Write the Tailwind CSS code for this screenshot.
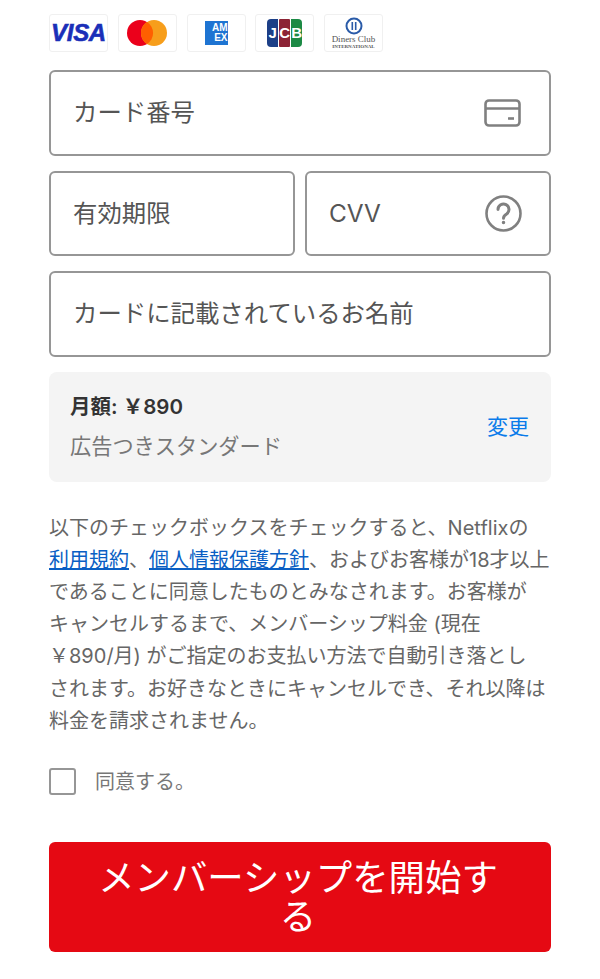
<!DOCTYPE html>
<html lang="ja">
<head>
<meta charset="UTF-8" />
<title>Payment</title>
<script src="https://cdn.jsdelivr.net/npm/@tailwindcss/browser@4"></script>
</head>
<body class="bg-white font-['Inter','Noto_Sans_CJK_JP',sans-serif] text-[#333] overflow-hidden">
<div class="w-[600px] h-[979px] px-[49px] pt-[14px]">

  <!-- card logos -->
  <div class="flex gap-[9.75px] h-[38px]">
    <div class="w-[59px] h-[38px] border border-[#f0f0f0] rounded-[3px] flex items-center justify-center">
      <span class="font-['Liberation_Sans',sans-serif] font-bold italic text-[24px] tracking-[-0.3px] text-[#1a2fb8] [-webkit-text-stroke:0.6px_#1a2fb8]">VISA</span>
    </div>
    <div class="w-[59px] h-[38px] border border-[#f0f0f0] rounded-[3px] flex items-center justify-center">
      <svg width="40" height="26" viewBox="0 0 40 26"><circle cx="13" cy="13" r="13" fill="#eb001b"/><circle cx="27" cy="13" r="13" fill="#f79e1b"/><path d="M20 2a13 13 0 0 1 0 22a13 13 0 0 1 0-22z" fill="#ff5f00"/></svg>
    </div>
    <div class="w-[59px] h-[38px] border border-[#f0f0f0] rounded-[3px] flex items-center justify-center">
      <div class="w-[23px] h-[24px] bg-[#1e74d2] flex flex-col items-end justify-center font-['Liberation_Sans',sans-serif] font-bold text-[10px] leading-[10px] text-white">
        <span>AM</span><span>EX</span>
      </div>
    </div>
    <div class="w-[59px] h-[38px] border border-[#f0f0f0] rounded-[3px] flex items-center justify-center">
      <div class="flex gap-[1px] font-['Liberation_Sans',sans-serif] font-bold text-[15px] text-white">
        <span class="w-[11px] h-[28px] bg-[#1c3f87] rounded-l-[4px] flex items-center justify-center">J</span>
        <span class="w-[11px] h-[28px] bg-[#8c2435] rounded-[1px] flex items-center justify-center">C</span>
        <span class="w-[11px] h-[28px] bg-[#1c8a45] rounded-r-[4px] flex items-center justify-center">B</span>
      </div>
    </div>
    <div class="w-[59px] h-[38px] border border-[#f0f0f0] rounded-[3px] flex flex-col items-center justify-center">
      <svg width="20" height="18" viewBox="0 0 20 18"><circle cx="10" cy="9" r="7.5" fill="none" stroke="#2a5ba8" stroke-width="2"/><path d="M8.3 5v8M11.7 5v8" stroke="#2a5ba8" stroke-width="1.6"/></svg>
      <span class="font-['Liberation_Serif',serif] text-[9px] leading-[9px] text-[#555]">Diners Club</span>
      <span class="font-['Liberation_Serif',serif] font-bold text-[5px] leading-[6px] text-[#555]">INTERNATIONAL</span>
    </div>
  </div>

  <!-- fields -->
  <div class="mt-[18px] h-[85.5px] border-2 border-[#969696] rounded-[6px] flex items-center justify-between pl-[22px] pr-[28px] text-[24.4px] text-[#555]">
    <span>カード番号</span>
    <svg width="37" height="28" viewBox="0 0 37 28" fill="none" stroke="#808080" stroke-width="2.6"><rect x="1.5" y="1.5" width="34" height="25" rx="3.5"/><path d="M1.5 9.5h34"/><path d="M24 19.5h6"/></svg>
  </div>
  <div class="mt-[15px] flex gap-[10px]">
    <div class="w-[246px] h-[85.5px] border-2 border-[#969696] rounded-[6px] flex items-center pl-[22px] text-[24.4px] text-[#555]">有効期限</div>
    <div class="w-[246px] h-[85.5px] border-2 border-[#969696] rounded-[6px] flex items-center justify-between pl-[22px] pr-[27px] text-[24.4px] text-[#555]">
      <span>CVV</span>
      <svg width="37" height="37" viewBox="0 0 37 37" fill="none" stroke="#808080" stroke-width="2.6"><circle cx="18.5" cy="18.5" r="17"/><path d="M13 14.5a5.5 5.5 0 1 1 8.6 4.5c-2.2 1.4-3.1 2.2-3.1 4.3" stroke-linecap="round" stroke-width="3"/><circle cx="18.5" cy="27.5" r="1" fill="#808080" stroke-width="1.5"/></svg>
    </div>
  </div>
  <div class="mt-[15px] h-[85.5px] border-2 border-[#969696] rounded-[6px] flex items-center pl-[22px] text-[24.4px] text-[#555]">カードに記載されているお名前</div>

  <!-- plan -->
  <div class="mt-[15.5px] h-[109.5px] bg-[#f4f4f4] rounded-[8px] flex items-center justify-between pl-[21px] pr-[22px]">
    <div>
      <div class="text-[20.5px] leading-[30px] font-semibold text-[#333]">月額: ￥890</div>
      <div class="mt-[9px] text-[21.2px] leading-[30px] text-[#777]">広告つきスタンダード</div>
    </div>
    <a class="text-[21px] text-[#0a7bea]">変更</a>
  </div>

  <!-- terms -->
  <p class="mt-[30px] text-[20px] leading-[32.2px] text-[#666]">以下のチェックボックスをチェックすると、Netflixの<br /><a class="text-[#0a5fc4] underline">利用規約</a>、<a class="text-[#0a5fc4] underline">個人情報保護方針</a>、およびお客様が18才以上<br />であることに同意したものとみなされます。お客様が<br />キャンセルするまで、メンバーシップ料金 (現在<br />￥890/月) がご指定のお支払い方法で自動引き落とし<br />されます。お好きなときにキャンセルでき、それ以降は<br />料金を請求されません。</p>

  <!-- agree -->
  <div class="mt-[30px] flex items-center gap-[19px]">
    <div class="w-[27px] h-[27px] border-2 border-[#969696] rounded-[3px]"></div>
    <span class="text-[20px] text-[#777]">同意する。</span>
  </div>

  <button class="mt-[45px] w-full h-[110px] bg-[#e50913] rounded-[6px] text-white text-[36.4px] leading-[39px] pl-[40px] pr-[44px] pt-[3px]">メンバーシップを開始する</button>
</div>
</body>
</html>
